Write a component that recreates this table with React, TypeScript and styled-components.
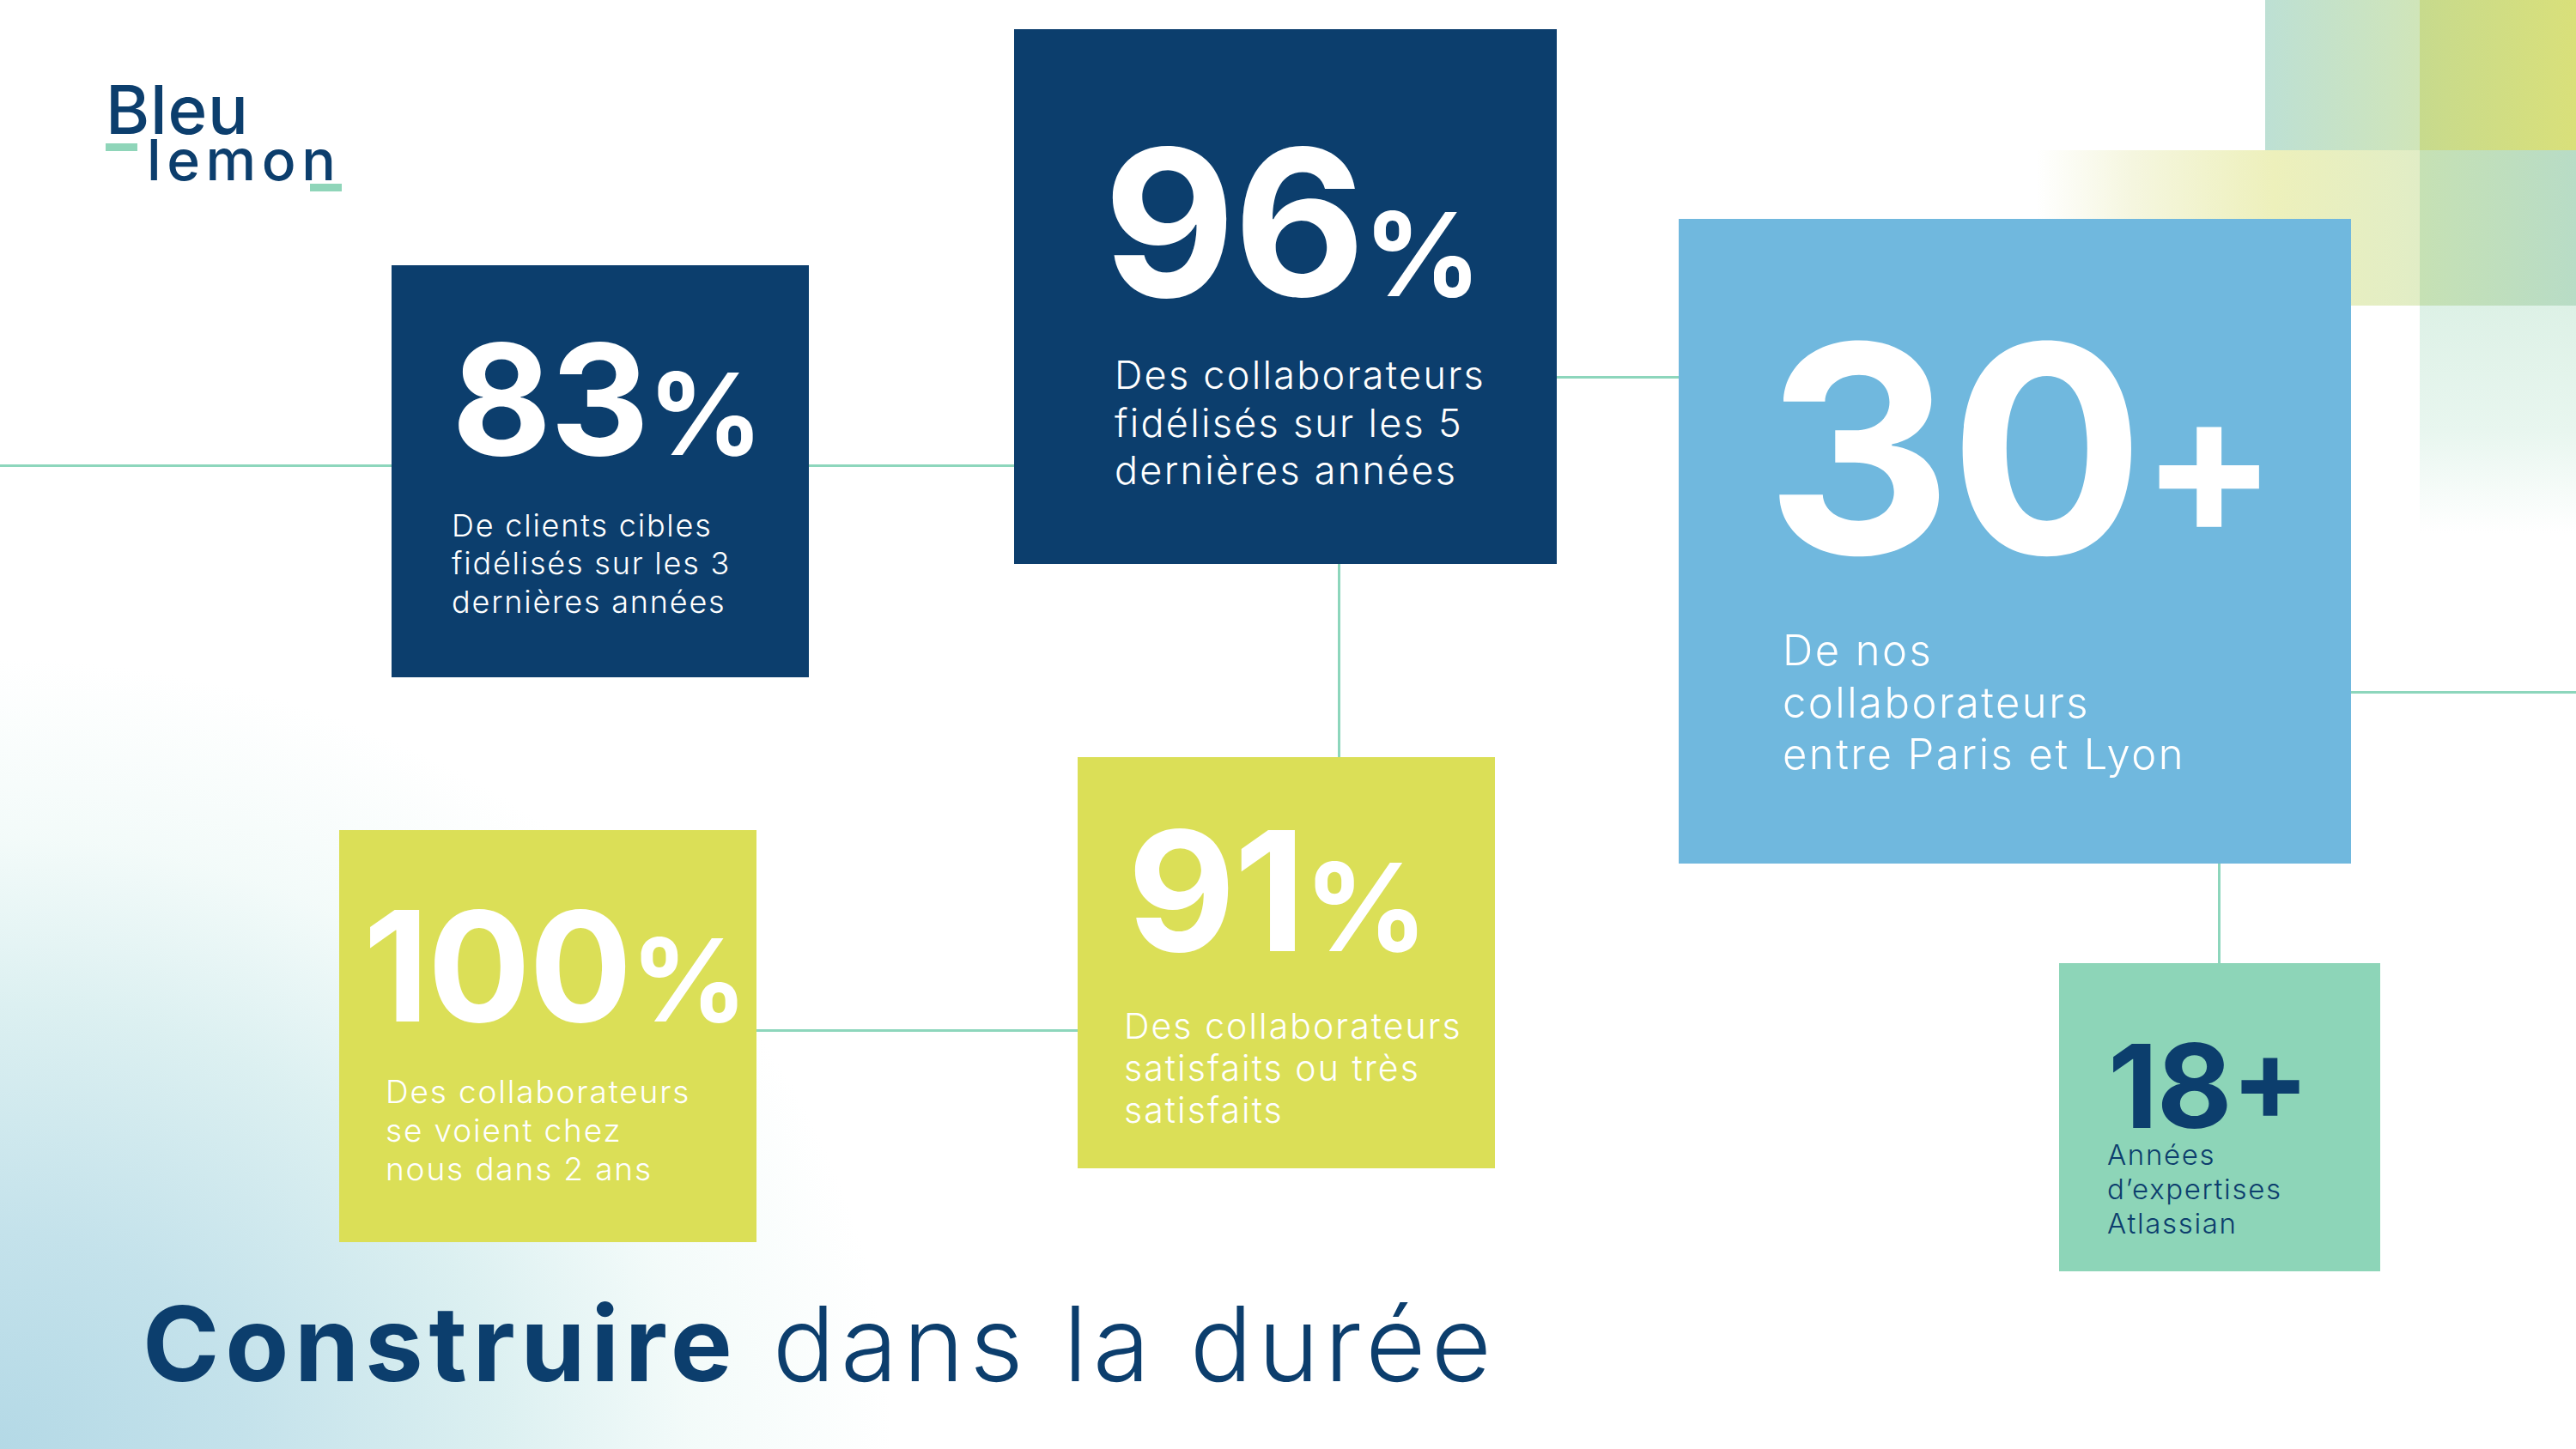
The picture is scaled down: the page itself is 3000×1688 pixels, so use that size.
import React from 'react'
import styled, {createGlobalStyle} from 'styled-components'

const NAVY = '#0c3e6d'
const LINE = '#8dd6bc'

const GlobalStyle = createGlobalStyle`
    html, body {
        margin: 0;
        padding: 0;
        background: #fff;
    }
    body {
        font-family: Inter, 'Liberation Sans', sans-serif;
        -webkit-font-smoothing: antialiased;
    }
`

const Page = styled.main`
    position: relative;
    width: 3000px;
    height: 1688px;
    overflow: hidden;
    box-sizing: border-box;
    padding: 99px 0 0 123px;
    display: flex;
    flex-direction: column;
    background:
        linear-gradient(90deg, #c7da8d, #d9e07a) 2818px 0 / 182px 175px no-repeat,
        linear-gradient(90deg, #bde0d4, #d0e5b9) 2638px 0 / 180px 175px no-repeat,
        linear-gradient(90deg, #c6e1b4, #b8dcc6) 2818px 175px / 182px 181px no-repeat,
        linear-gradient(90deg, rgba(255, 255, 255, 0) 0%, #f5f6df 25%, #edf0bb 62%, #e1edc6 100%) 2372px 175px / 446px 181px no-repeat,
        linear-gradient(180deg, #ddf1e6 0%, #e8f6ef 55%, rgba(255, 255, 255, 0) 100%) 2818px 356px / 182px 265px no-repeat,
        radial-gradient(ellipse 1300px 1150px at 0px 1688px, #b4d9e6 0%, #c4e2eb 22%, #dcf0f1 45%, rgba(238, 249, 247, 0.7) 62%, rgba(255, 255, 255, 0) 80%),
        #fff;
`

/* logo */

const Logo = styled.div`
    position: relative;
    z-index: 1;
    display: flex;
    flex-direction: column;
    color: ${NAVY};
    font-weight: 500;
`

const LogoWord = styled.span<{$size: number; $spacing: number}>`
    display: block;
    font-size: ${p => p.$size}px;
    line-height: ${p => p.$size * 0.74}px;
    letter-spacing: ${p => p.$spacing}em;
    white-space: nowrap;
`

const LogoRow = styled.div`
    display: flex;
    align-items: flex-start;
    gap: 11px;
    margin-top: 10px;
`

const LogoTail = styled.div`
    display: flex;
    flex-direction: column;
    align-items: flex-end;
    gap: 3px;
    margin-top: -5px;
`

const LogoBar = styled.span`
    display: block;
    width: 37px;
    height: 9px;
    background: #8fd5b9;
`

/* diagram */

const Diagram = styled.div`
    position: absolute;
    inset: 0;
`

const Connector = styled.div<{$x: number; $y: number; $len: number; $vertical?: boolean}>`
    position: absolute;
    left: ${p => p.$x}px;
    top: ${p => p.$y}px;
    width: ${p => (p.$vertical ? 3 : p.$len)}px;
    height: ${p => (p.$vertical ? p.$len : 3)}px;
    background: ${LINE};
`

const Node = styled.section<{$x: number; $y: number; $w: number; $h: number; $bg: string; $pad: number}>`
    position: absolute;
    left: ${p => p.$x}px;
    top: ${p => p.$y}px;
    width: ${p => p.$w}px;
    height: ${p => p.$h}px;
    box-sizing: border-box;
    padding-top: ${p => p.$pad}px;
    background: ${p => p.$bg};
    display: flex;
    flex-direction: column;
`

const Figure = styled.div<{$size: number; $indent: number; $color: string}>`
    margin-left: ${p => p.$indent}px;
    font-size: ${p => p.$size}px;
    line-height: 0.727em;
    font-weight: 700;
    letter-spacing: -0.01em;
    color: ${p => p.$color};
    white-space: nowrap;
`

const Unit = styled.span<{$size: number; $raise?: number}>`
    font-size: ${p => p.$size}px;
    line-height: 0.727em;
    vertical-align: ${p => p.$raise ?? 0}px;
`

const Caption = styled.p<{$size: number; $lh: number; $gap: number; $indent: number; $color: string}>`
    margin: ${p => p.$gap}px 0 0 ${p => p.$indent}px;
    font-size: ${p => p.$size}px;
    line-height: ${p => p.$lh}px;
    font-weight: 300;
    letter-spacing: 0.05em;
    color: ${p => p.$color};
    white-space: nowrap;
`

/* title */

const Title = styled.h1`
    position: relative;
    z-index: 1;
    margin: auto 0 62px 43px;
    font-size: 121px;
    line-height: 121px;
    font-weight: 300;
    color: ${NAVY};
    white-space: nowrap;
    letter-spacing: 0.052em;

    strong {
        font-weight: 700;
        letter-spacing: 0.055em;
    }
`

type Stat = {
    key: string
    box: [number, number, number, number]
    bg: string
    ink: string
    pad: number
    value: string
    unit: string
    fig: {size: number; indent: number; unit: number; raise?: number}
    cap: {size: number; lh: number; gap: number; indent: number}
    lines: string[]
}

const stats: Stat[] = [
    {
        key: 'clients',
        box: [456, 309, 486, 480],
        bg: NAVY,
        ink: '#fff',
        pad: 91,
        value: '83',
        unit: '%',
        fig: {size: 179, indent: 70, unit: 132},
        cap: {size: 36, lh: 44.5, gap: 59, indent: 70},
        lines: ['De clients cibles', 'fidélisés sur les 3', 'dernières années'],
    },
    {
        key: 'fidelite',
        box: [1181, 34, 632, 623],
        bg: NAVY,
        ink: '#fff',
        pad: 139,
        value: '96',
        unit: '%',
        fig: {size: 237, indent: 104, unit: 135},
        cap: {size: 45, lh: 55.5, gap: 64, indent: 117},
        lines: ['Des collaborateurs', 'fidélisés sur les 5', 'dernières années'],
    },
    {
        key: 'equipe',
        box: [1955, 255, 783, 751],
        bg: '#70b8de',
        ink: '#fff',
        pad: 145,
        value: '30',
        unit: '+',
        fig: {size: 337, indent: 101, unit: 232, raise: 22},
        cap: {size: 49, lh: 60.5, gap: 83, indent: 121},
        lines: ['De nos', 'collaborateurs', 'entre Paris et Lyon'],
    },
    {
        key: 'avenir',
        box: [395, 967, 486, 480],
        bg: '#dbdf57',
        ink: '#fff',
        pad: 94,
        value: '100',
        unit: '%',
        fig: {size: 178, indent: 28, unit: 134},
        cap: {size: 37, lh: 45, gap: 59, indent: 54},
        lines: ['Des collaborateurs', 'se voient chez', 'nous dans 2 ans'],
    },
    {
        key: 'satisfaction',
        box: [1255, 882, 486, 479],
        bg: '#dbdf57',
        ink: '#fff',
        pad: 85,
        value: '91',
        unit: '%',
        fig: {size: 194, indent: 58, unit: 142},
        cap: {size: 41, lh: 49, gap: 63, indent: 54},
        lines: ['Des collaborateurs', 'satisfaits ou très', 'satisfaits'],
    },
    {
        key: 'atlassian',
        box: [2398, 1122, 374, 359],
        bg: '#8dd5b8',
        ink: NAVY,
        pad: 86,
        value: '18',
        unit: '+',
        fig: {size: 135, indent: 57, unit: 134, raise: 9},
        cap: {size: 33, lh: 40, gap: 11, indent: 56},
        lines: ['Années', 'd’expertises', 'Atlassian'],
    },
]

const links = [
    {x: 0, y: 541, len: 456},
    {x: 942, y: 541, len: 239},
    {x: 1813, y: 438, len: 142},
    {x: 1558, y: 657, len: 225, vertical: true},
    {x: 881, y: 1199, len: 374},
    {x: 2738, y: 805, len: 262},
    {x: 2583, y: 1006, len: 116, vertical: true},
]

export default function App() {
    return (
        <>
            <GlobalStyle />
            <Page>
                <Diagram>
                    {links.map((l, i) => (
                        <Connector key={i} $x={l.x} $y={l.y} $len={l.len} $vertical={l.vertical} />
                    ))}
                    {stats.map(s => (
                        <Node key={s.key} $x={s.box[0]} $y={s.box[1]} $w={s.box[2]} $h={s.box[3]} $bg={s.bg} $pad={s.pad}>
                            <Figure $size={s.fig.size} $indent={s.fig.indent} $color={s.ink}>
                                {s.value}
                                <Unit $size={s.fig.unit} $raise={s.fig.raise}>
                                    {s.unit}
                                </Unit>
                            </Figure>
                            <Caption
                                $size={s.cap.size}
                                $lh={s.cap.lh}
                                $gap={s.cap.gap}
                                $indent={s.cap.indent}
                                $color={s.ink}
                            >
                                {s.lines.map((line, i) => (
                                    <React.Fragment key={i}>
                                        {i > 0 && <br />}
                                        {line}
                                    </React.Fragment>
                                ))}
                            </Caption>
                        </Node>
                    ))}
                </Diagram>

                <Logo>
                    <LogoWord $size={78} $spacing={0.01}>Bleu</LogoWord>
                    <LogoRow>
                        <LogoBar />
                        <LogoTail>
                            <LogoWord $size={66} $spacing={0.1}>lemon</LogoWord>
                            <LogoBar />
                        </LogoTail>
                    </LogoRow>
                </Logo>

                <Title>
                    <strong>Construire</strong> dans la durée
                </Title>
            </Page>
        </>
    )
}
